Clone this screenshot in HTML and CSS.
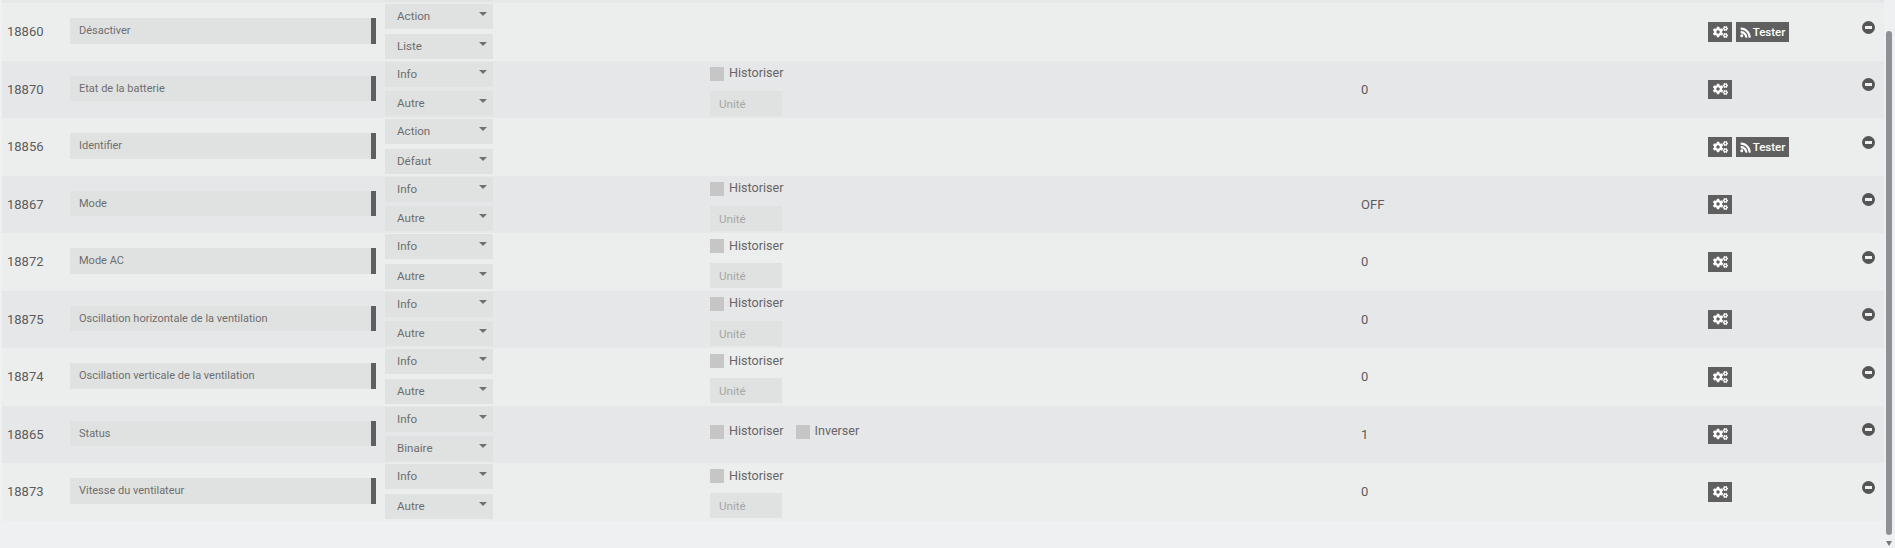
FILE: index.html
```html
<!DOCTYPE html>
<html lang="fr">
<head>
    <meta charset="UTF-8">
    <meta name="viewport" content="width=device-width, initial-scale=1.0">
    <title>Commandes</title>
    <link rel="stylesheet" href="styles.css">
</head>
<body>
    <svg class="defs" width="0" height="0">
        <symbol id="i-cogs" viewBox="0 0 640 512"><path d="M512.1 191l-8.2 14.3c-3 5.3-9.4 7.5-15.1 5.4-11.8-4.4-22.6-10.7-32.1-18.6-4.6-3.8-5.8-10.5-2.8-15.7l8.2-14.3c-6.9-8-12.3-17.3-15.9-27.4h-16.5c-6 0-11.2-4.3-12.2-10.3-2-12-2.1-24.6 0-37.1 1-6 6.2-10.4 12.2-10.4h16.5c3.6-10.1 9-19.4 15.9-27.4l-8.2-14.3c-3-5.2-1.9-11.9 2.8-15.7 9.5-7.9 20.4-14.2 32.1-18.6 5.7-2.1 12.1.1 15.1 5.4l8.2 14.3c10.5-1.9 21.2-1.9 31.7 0L552 6.3c3-5.3 9.4-7.5 15.1-5.4 11.8 4.4 22.6 10.7 32.1 18.6 4.6 3.8 5.8 10.5 2.8 15.7l-8.2 14.3c6.9 8 12.3 17.3 15.9 27.4h16.5c6 0 11.2 4.3 12.2 10.3 2 12 2.1 24.6 0 37.1-1 6-6.2 10.4-12.2 10.4h-16.5c-3.6 10.1-9 19.4-15.9 27.4l8.2 14.3c3 5.2 1.9 11.9-2.8 15.7-9.5 7.9-20.4 14.2-32.1 18.6-5.7 2.1-12.1-.1-15.1-5.4l-8.2-14.3c-10.4 1.9-21.2 1.9-31.7 0zm-10.5-58.8c38.5 29.6 82.4-14.3 52.8-52.8-38.5-29.7-82.4 14.3-52.8 52.8zM386.3 286.1l33.7 16.8c10.1 5.8 14.5 18.1 10.5 29.1-8.9 24.2-26.4 46.4-42.6 65.8-7.4 8.9-20.2 11.1-30.3 5.3l-29.1-16.8c-16 13.7-34.6 24.6-54.9 31.7v33.6c0 11.6-8.3 21.6-19.7 23.6-24.6 4.2-50.4 4.4-75.9 0-11.5-2-20-11.9-20-23.6V418c-20.3-7.2-38.9-18-54.9-31.7L74 403c-10 5.8-22.9 3.6-30.3-5.3-16.2-19.4-33.3-41.6-42.2-65.7-4-10.9.4-23.2 10.5-29.1l33.3-16.8c-3.9-20.9-3.9-42.4 0-63.4L12 205.8c-10.1-5.8-14.6-18.1-10.5-29 8.9-24.2 26-46.4 42.2-65.8 7.4-8.9 20.2-11.1 30.3-5.3l29.1 16.8c16-13.7 34.6-24.6 54.9-31.7V57.1c0-11.5 8.2-21.5 19.6-23.5 24.6-4.2 50.5-4.4 76-.1 11.5 2 20 11.9 20 23.6v33.6c20.3 7.2 38.9 18 54.9 31.7l29.1-16.8c10-5.8 22.9-3.6 30.3 5.3 16.2 19.4 33.2 41.6 42.1 65.8 4 10.9.1 23.2-10 29.1l-33.7 16.8c3.9 21 3.9 42.5 0 63.5zm-117.6 21.1c59.2-77-28.7-164.9-105.7-105.7-59.2 77 28.7 164.9 105.7 105.7zm243.4 182.7l-8.2 14.3c-3 5.3-9.4 7.5-15.1 5.4-11.8-4.4-22.6-10.7-32.1-18.6-4.6-3.8-5.8-10.5-2.8-15.7l8.2-14.3c-6.9-8-12.3-17.3-15.9-27.4h-16.5c-6 0-11.2-4.3-12.2-10.3-2-12-2.1-24.6 0-37.1 1-6 6.2-10.4 12.2-10.4h16.5c3.6-10.1 9-19.4 15.9-27.4l-8.2-14.3c-3-5.2-1.9-11.9 2.8-15.7 9.5-7.9 20.4-14.2 32.1-18.6 5.7-2.1 12.1.1 15.1 5.4l8.2 14.3c10.5-1.9 21.2-1.9 31.7 0l8.2-14.3c3-5.3 9.4-7.5 15.1-5.4 11.8 4.4 22.6 10.7 32.1 18.6 4.6 3.8 5.8 10.5 2.8 15.7l-8.2 14.3c6.9 8 12.3 17.3 15.9 27.4h16.5c6 0 11.2 4.3 12.2 10.3 2 12 2.1 24.6 0 37.1-1 6-6.2 10.4-12.2 10.4h-16.5c-3.6 10.1-9 19.4-15.9 27.4l8.2 14.3c3 5.2 1.9 11.9-2.8 15.7-9.5 7.9-20.4 14.2-32.1 18.6-5.7 2.1-12.1-.1-15.1-5.4l-8.2-14.3c-10.4 1.9-21.2 1.9-31.7 0zM501.6 431c38.5 29.6 82.4-14.3 52.8-52.8-38.5-29.6-82.4 14.3-52.8 52.8z"/></symbol>
        <symbol id="i-rss" viewBox="0 0 448 512"><path d="M128.1 416c0 35.300-28.700 64-64 64S0 451.300 0 416s28.700-64 64-64 64.100 28.700 64.100 64zM304 472C296 328 184 216 40 208c-13.700-.8-24 10-24 24v48c0 12.600 9.700 23.200 22.300 24 91.700 6.800 163 78.300 169.700 169.700.9 12.600 11.500 22.300 24 22.300h48c14 0 24.800-10.300 24-24zm144 .5C440 248 264 72 39.500 64 26 63.500 16 74.300 16 88v48c0 12.900 10.200 23.400 23.100 24 171.200 7 305.900 141.700 312.900 312.900.5 12.900 11.100 23.100 24 23.100h48c13.700 0 24.500-10 24-23.500z"/></symbol>
    </svg>

    <div class="page">
        <main class="commands">
            <div class="row-clipped"><span class="clip-select"></span></div>

            <div class="row odd">
                <span class="cmd-id">18860</span>
                <div class="cmd-name"><input class="name-input" value="Désactiver"></div>
                <div class="cmd-types">
                    <div class="select">Action</div>
                    <div class="select">Liste</div>
                </div>
                <div class="cmd-options"></div>
                <span class="cmd-value"></span>
                <div class="cmd-actions">
                    <a class="btn btn-cog"><svg class="ico-cogs"><use href="#i-cogs"/></svg></a>
                    <a class="btn btn-test"><svg class="ico-rss"><use href="#i-rss"/></svg>Tester</a>
                </div>
                <span class="remove"></span>
            </div>

            <div class="row even">
                <span class="cmd-id">18870</span>
                <div class="cmd-name"><input class="name-input" value="Etat de la batterie"></div>
                <div class="cmd-types">
                    <div class="select">Info</div>
                    <div class="select">Autre</div>
                </div>
                <div class="cmd-options">
                    <label class="check"><span class="box"></span>Historiser</label>
                    <input class="unit-input" placeholder="Unité">
                </div>
                <span class="cmd-value">0</span>
                <div class="cmd-actions">
                    <a class="btn btn-cog"><svg class="ico-cogs"><use href="#i-cogs"/></svg></a>
                </div>
                <span class="remove"></span>
            </div>

            <div class="row odd">
                <span class="cmd-id">18856</span>
                <div class="cmd-name"><input class="name-input" value="Identifier"></div>
                <div class="cmd-types">
                    <div class="select">Action</div>
                    <div class="select">Défaut</div>
                </div>
                <div class="cmd-options"></div>
                <span class="cmd-value"></span>
                <div class="cmd-actions">
                    <a class="btn btn-cog"><svg class="ico-cogs"><use href="#i-cogs"/></svg></a>
                    <a class="btn btn-test"><svg class="ico-rss"><use href="#i-rss"/></svg>Tester</a>
                </div>
                <span class="remove"></span>
            </div>

            <div class="row even">
                <span class="cmd-id">18867</span>
                <div class="cmd-name"><input class="name-input" value="Mode"></div>
                <div class="cmd-types">
                    <div class="select">Info</div>
                    <div class="select">Autre</div>
                </div>
                <div class="cmd-options">
                    <label class="check"><span class="box"></span>Historiser</label>
                    <input class="unit-input" placeholder="Unité">
                </div>
                <span class="cmd-value">OFF</span>
                <div class="cmd-actions">
                    <a class="btn btn-cog"><svg class="ico-cogs"><use href="#i-cogs"/></svg></a>
                </div>
                <span class="remove"></span>
            </div>

            <div class="row odd">
                <span class="cmd-id">18872</span>
                <div class="cmd-name"><input class="name-input" value="Mode AC"></div>
                <div class="cmd-types">
                    <div class="select">Info</div>
                    <div class="select">Autre</div>
                </div>
                <div class="cmd-options">
                    <label class="check"><span class="box"></span>Historiser</label>
                    <input class="unit-input" placeholder="Unité">
                </div>
                <span class="cmd-value">0</span>
                <div class="cmd-actions">
                    <a class="btn btn-cog"><svg class="ico-cogs"><use href="#i-cogs"/></svg></a>
                </div>
                <span class="remove"></span>
            </div>

            <div class="row even">
                <span class="cmd-id">18875</span>
                <div class="cmd-name"><input class="name-input" value="Oscillation horizontale de la ventilation"></div>
                <div class="cmd-types">
                    <div class="select">Info</div>
                    <div class="select">Autre</div>
                </div>
                <div class="cmd-options">
                    <label class="check"><span class="box"></span>Historiser</label>
                    <input class="unit-input" placeholder="Unité">
                </div>
                <span class="cmd-value">0</span>
                <div class="cmd-actions">
                    <a class="btn btn-cog"><svg class="ico-cogs"><use href="#i-cogs"/></svg></a>
                </div>
                <span class="remove"></span>
            </div>

            <div class="row odd">
                <span class="cmd-id">18874</span>
                <div class="cmd-name"><input class="name-input" value="Oscillation verticale de la ventilation"></div>
                <div class="cmd-types">
                    <div class="select">Info</div>
                    <div class="select">Autre</div>
                </div>
                <div class="cmd-options">
                    <label class="check"><span class="box"></span>Historiser</label>
                    <input class="unit-input" placeholder="Unité">
                </div>
                <span class="cmd-value">0</span>
                <div class="cmd-actions">
                    <a class="btn btn-cog"><svg class="ico-cogs"><use href="#i-cogs"/></svg></a>
                </div>
                <span class="remove"></span>
            </div>

            <div class="row even">
                <span class="cmd-id">18865</span>
                <div class="cmd-name"><input class="name-input" value="Status"></div>
                <div class="cmd-types">
                    <div class="select">Info</div>
                    <div class="select">Binaire</div>
                </div>
                <div class="cmd-options binary">
                    <label class="check"><span class="box"></span>Historiser</label>
                    <label class="check"><span class="box"></span>Inverser</label>
                </div>
                <span class="cmd-value">1</span>
                <div class="cmd-actions">
                    <a class="btn btn-cog"><svg class="ico-cogs"><use href="#i-cogs"/></svg></a>
                </div>
                <span class="remove"></span>
            </div>

            <div class="row odd">
                <span class="cmd-id">18873</span>
                <div class="cmd-name"><input class="name-input" value="Vitesse du ventilateur"></div>
                <div class="cmd-types">
                    <div class="select">Info</div>
                    <div class="select">Autre</div>
                </div>
                <div class="cmd-options">
                    <label class="check"><span class="box"></span>Historiser</label>
                    <input class="unit-input" placeholder="Unité">
                </div>
                <span class="cmd-value">0</span>
                <div class="cmd-actions">
                    <a class="btn btn-cog"><svg class="ico-cogs"><use href="#i-cogs"/></svg></a>
                </div>
                <span class="remove"></span>
            </div>
        </main>

        <div class="scrollbar">
            <span class="scroll-thumb"></span>
            <span class="scroll-down"></span>
        </div>
    </div>
</body>
</html>
```

FILE: styles.css
```css
html, body { margin: 0; padding: 0; height: 100%; overflow: hidden; }
body { background: #eff0f1; color: #666; font-family: Roboto, Arial, sans-serif; font-size: 14px; }
input { font-family: inherit; border: none; outline: none; margin: 0; border-radius: 0; box-sizing: border-box; }
.defs { position: absolute; }

.page { display: flex; height: 548px; }
.commands { flex: 1; padding-left: 2px; min-width: 0; }

.row-clipped { height: 3px; background: #e6e7e8; padding-left: 383px; }
.clip-select { display: block; width: 108px; height: 1px; background: #e0e2e1; }

.row { display: grid; grid-template-columns: 63px 315px 325px 651px 347px 154px 1fr; height: 57.5px; padding-left: 5px; box-sizing: border-box; }
.odd { background: #eceeee; }
.even { background: #e6e7e8; }

.cmd-id { align-self: center; font-size: 13px; color: #5c5c5c; }
.cmd-name { display: flex; align-self: center; margin-top: -2px; width: 306px; height: 25.5px; border-right: 5px solid #5f5f5f; box-sizing: border-box; }
.name-input { flex: 1; min-width: 0; height: 100%; background: #e0e2e1; color: #6e6e6e; font-size: 11px; padding: 0 0 0 9px; }

.cmd-types { display: flex; flex-direction: column; gap: 4.5px; padding-top: 1px; }
.select { position: relative; width: 108px; height: 25px; background: #e0e2e1; color: #6e6e6e; font-size: 11.6px; line-height: 25px; padding-left: 12px; box-sizing: border-box; }
.select::after { content: ""; position: absolute; top: 8px; right: 6px; border-left: 4.5px solid transparent; border-right: 4.5px solid transparent; border-top: 4px solid #707070; }

.cmd-options { display: flex; flex-direction: column; align-items: flex-start; gap: 10px; padding-top: 6px; }
.cmd-options.binary { flex-direction: row; gap: 12px; padding-top: 19px; }
.check { display: flex; align-items: center; gap: 5px; height: 14px; padding-bottom: 2px; box-sizing: border-box; font-size: 12.6px; color: #666; }
.box { width: 14px; height: 14px; margin-bottom: -2px; background: #c6c6c6; }
.unit-input { width: 72px; height: 25px; background: #e0e2e1; font-size: 11.6px; padding: 1px 0 0 9px; }
.unit-input::placeholder { color: #a6a6a6; opacity: 1; }

.cmd-value { align-self: center; font-size: 13px; color: #5c5c5c; }

.cmd-actions { display: flex; align-items: flex-start; gap: 4px; padding-top: 19px; }
.btn { display: flex; align-items: center; justify-content: center; height: 19.5px; background: #5f5f5f; color: #fff; font-size: 11.5px; font-weight: 500; }
.btn-cog { width: 24px; }
.btn-test { width: 53px; gap: 2px; }
.ico-cogs { width: 15px; height: 12px; fill: #fff; }
.ico-rss { width: 11px; height: 12px; fill: #fff; }

.remove { position: relative; display: block; width: 13px; height: 13px; margin-top: 17.5px; border-radius: 50%; background: #555; }
.remove::after { content: ""; position: absolute; left: 3px; right: 3px; top: 5px; height: 3px; background: #f0f0f0; }

.scrollbar { position: relative; width: 11px; flex: none; }
.scroll-thumb { position: absolute; left: 2px; top: 31px; width: 6px; height: 504px; background: #8f8f96; border-radius: 3px; }
.scroll-down { position: absolute; left: 2px; top: 541px; border-left: 3.5px solid transparent; border-right: 3.5px solid transparent; border-top: 5px solid #777; }
```
